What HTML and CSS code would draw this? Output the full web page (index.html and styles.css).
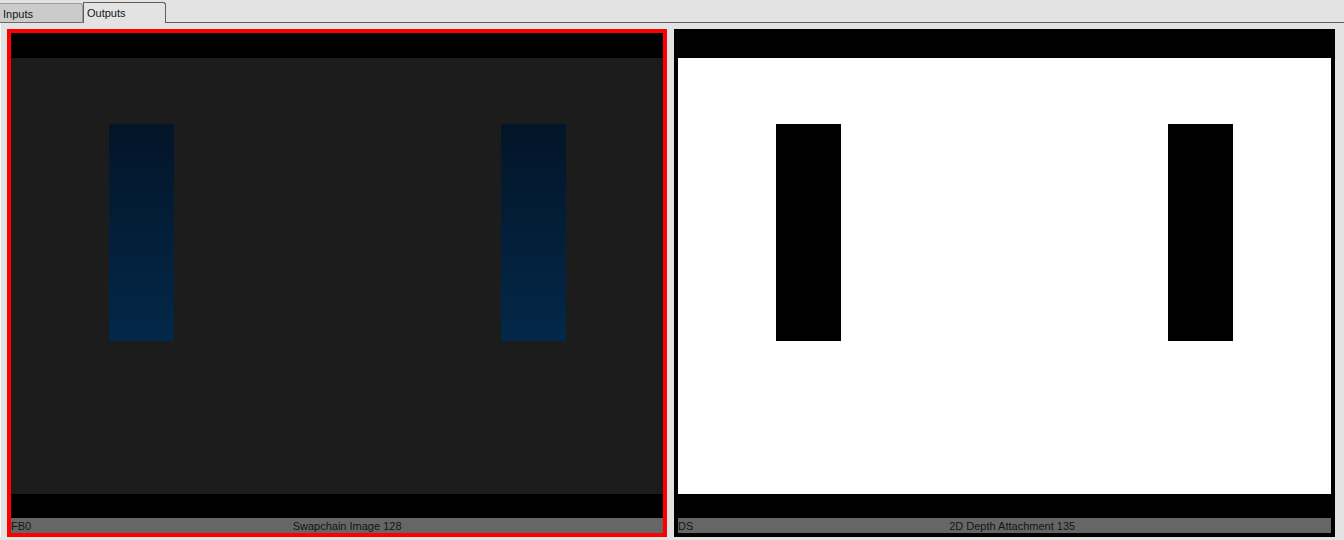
FILE: index.html
```html
<!DOCTYPE html>
<html>
<head>
<meta charset="utf-8">
<link rel="stylesheet" href="styles.css">
</head>
<body>
<div class="tabs">
  <div class="tab">Inputs</div>
  <div class="tab active">Outputs</div>
  <div class="tab-fill"></div>
</div>
<div class="panels">
  <div class="panel selected">
    <div class="view">
      <div class="content dark">
        <div class="rect blue"></div>
        <div class="rect blue"></div>
      </div>
    </div>
    <div class="label"><span class="name">FB0</span><span class="title">Swapchain Image 128</span></div>
  </div>
  <div class="panel">
    <div class="view">
      <div class="content light">
        <div class="rect black"></div>
        <div class="rect black"></div>
      </div>
    </div>
    <div class="label"><span class="name">DS</span><span class="title">2D Depth Attachment 135</span></div>
  </div>
</div>
</body>
</html>
```
FILE: styles.css
```css
html, body {
  margin: 0;
  padding: 0;
}
body {
  width: 1344px;
  height: 540px;
  background: #e3e3e3;
  font-family: "Liberation Sans", Arial, sans-serif;
  font-size: 11px;
  color: #141414;
  overflow: hidden;
}
.tabs {
  display: flex;
  align-items: flex-end;
  height: 23px;
}
.tab {
  box-sizing: border-box;
  width: 83px;
  height: 20px;
  padding: 3px 0 0 3px;
  background: #cbcbcb;
  border: 1px solid #9c9c9c;
  border-left: none;
  border-bottom: 1px solid #6a6a6a;
  border-top-right-radius: 3px;
  line-height: 14px;
}
.tab.active {
  height: 21px;
  background: #e3e3e3;
  border: 1px solid #5e5e5e;
  border-bottom: none;
  padding-left: 3px;
}
.tab-fill {
  flex: 1;
  height: 1px;
  background: #5e5e5e;
}
.panels {
  display: flex;
  gap: 7px;
  padding: 6px 9px 0 6px;
  height: 508px;
  border-left: 1px solid #f8f8f8;
}
.panel {
  flex: 0 0 660px;
  box-sizing: border-box;
  height: 508px;
  border: 4px solid #000;
  display: flex;
  flex-direction: column;
}
.panel + .panel {
  flex: 1 1 auto;
}
.panel.selected {
  border-color: #ff0000;
}
.view {
  height: 485px;
  background: #000;
  padding-top: 25px;
  box-sizing: border-box;
}
.content {
  height: 436px;
  box-sizing: border-box;
  padding: 66px 0 0 98px;
  display: flex;
  align-items: flex-start;
  gap: 327px;
}
.content.dark {
  background: #1c1c1c;
}
.content.light {
  background: #ffffff;
}
.rect {
  width: 65px;
  height: 217px;
}
.rect.blue {
  background: linear-gradient(#031528, #032849);
}
.rect.black {
  background: #000;
}
.label {
  height: 15px;
  background: #666666;
  display: flex;
  line-height: 16px;
  white-space: nowrap;
}
.label .title {
  flex: 1;
  text-align: center;
}
```
